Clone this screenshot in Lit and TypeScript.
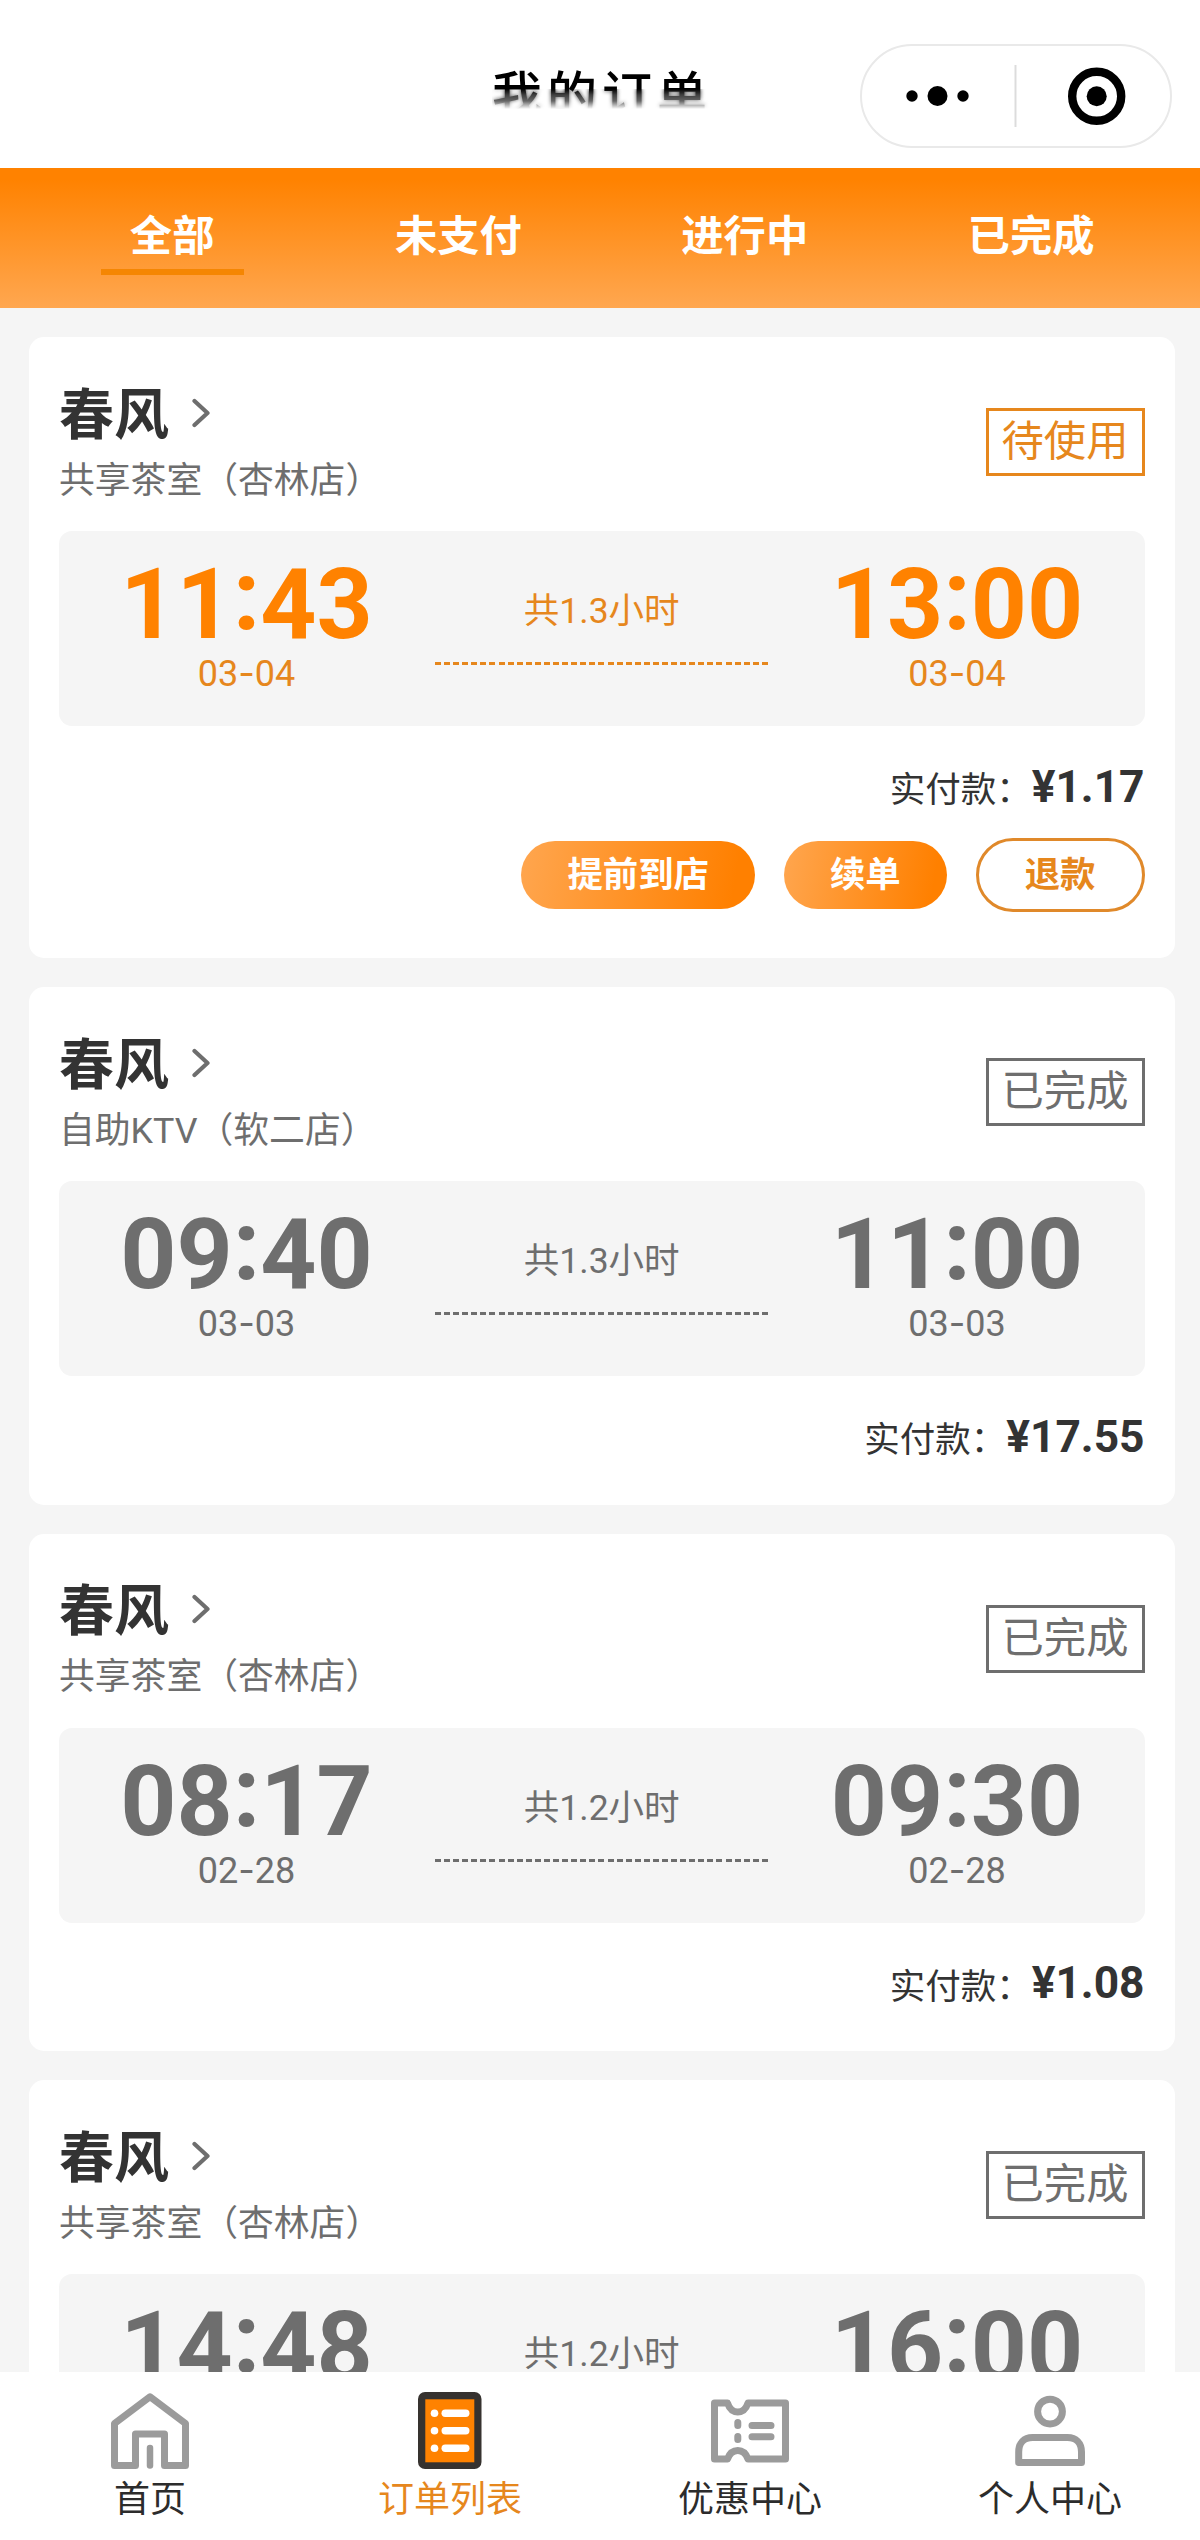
import { LitElement, html, svg, css } from "lit";
import { customElement, property } from "lit/decorators.js";
import { classMap } from "lit/directives/class-map.js";

interface Order {
  shop: string;
  status: string;
  active?: boolean;
  start: string;
  end: string;
  date?: string;
  duration: string;
  price?: string;
}

const ORDERS: Order[] = [
  { shop: "共享茶室（杏林店）", status: "待使用", active: true, start: "11:43", end: "13:00", date: "03-04", duration: "共1.3小时", price: "¥1.17" },
  { shop: "自助KTV（软二店）", status: "已完成", start: "09:40", end: "11:00", date: "03-03", duration: "共1.3小时", price: "¥17.55" },
  { shop: "共享茶室（杏林店）", status: "已完成", start: "08:17", end: "09:30", date: "02-28", duration: "共1.2小时", price: "¥1.08" },
  { shop: "共享茶室（杏林店）", status: "已完成", start: "14:48", end: "16:00", duration: "共1.2小时" },
];

@customElement("order-card")
export class OrderCard extends LitElement {
  @property({ attribute: false }) order!: Order;

  static styles = css`
    :host {
      display: block;
      flex: none;
      background: #fff;
      border-radius: 15px;
      padding: 0 30px 17px;
      color: #6e6e6e;
    }
    .head {
      display: flex;
      justify-content: space-between;
      align-items: flex-start;
      height: 194px;
    }
    .name {
      display: flex;
      align-items: center;
      gap: 23px;
      margin-top: 42.5px;
      font-size: 55px;
      line-height: 70px;
      font-weight: 700;
      color: #333;
    }
    .chev {
      display: block;
      width: 18px;
      height: 30px;
      margin-bottom: 4px;
    }
    .shop {
      margin-top: 6px;
      font-size: 35.8px;
      line-height: 50px;
    }
    .tag {
      box-sizing: border-box;
      margin-top: 71px;
      width: 159px;
      height: 68px;
      border: 3px solid currentColor;
      text-align: center;
      font-size: 42.3px;
      line-height: 61px;
      white-space: nowrap;
    }
    .box {
      display: grid;
      grid-template-columns: 375px 1fr 375px;
      height: 195px;
      border-radius: 13px;
      background: #f5f5f5;
    }
    .col {
      display: flex;
      flex-direction: column;
      align-items: center;
    }
    .time {
      display: flex;
      margin-top: 24px;
      height: 98px;
      font-size: 98px;
      line-height: 100px;
      font-weight: 700;
    }
    .colon {
      line-height: 82px;
    }
    .date {
      font-size: 36px;
      line-height: 41px;
    }
    .dash {
      font-family: Inter, sans-serif;
    }
    .mid {
      display: flex;
      flex-direction: column;
      align-items: center;
    }
    .dur {
      margin-top: 55px;
      font-size: 35.5px;
      line-height: 50px;
      white-space: nowrap;
    }
    .line {
      width: 333px;
      height: 3px;
      margin-top: 26px;
      background: repeating-linear-gradient(90deg, currentColor 0 6px, transparent 6px 9.08px);
    }
    .accent {
      color: #e6871d;
    }
    .accent .time {
      color: #ff8200;
    }
    .pay {
      display: flex;
      justify-content: flex-end;
      align-items: center;
      height: 99px;
      margin: 11px 0 1.5px;
      color: #333;
      font-size: 35.5px;
    }
    .price {
      font-size: 44.3px;
      font-weight: 700;
    }
    .actions {
      display: flex;
      justify-content: flex-end;
      align-items: center;
      gap: 29px;
      margin-bottom: 29.5px;
    }
    .btn {
      padding: 0 46px;
      height: 68px;
      border-radius: 37px;
      font-size: 35.4px;
      line-height: 68px;
      font-weight: 700;
      color: #fff;
      background: linear-gradient(100deg, #ffa64f, #ff8000 90%);
    }
    .ghost {
      border: 3px solid #e0892a;
      color: #e6871d;
      background: none;
    }
  `;

  private time(value: string, date?: string) {
    const [h, m] = value.split(":");
    const [mo, d] = (date ?? "").split("-");
    return html`<div class="col">
      <div class="time"><span>${h}</span><span class="colon">:</span><span>${m}</span></div>
      ${date ? html`<div class="date">${mo}<span class="dash">-</span>${d}</div>` : null}
    </div>`;
  }

  render() {
    const o = this.order;
    const tone = { accent: !!o.active };
    return html`
      <div class="head">
        <div>
          <div class="name">
            春风
            <svg class="chev" viewBox="0 0 18 30" fill="none" stroke="#6e6e6e" stroke-width="4.2" stroke-linecap="round" stroke-linejoin="round">
              <path d="M2.5 3L15.5 15L2.5 27" />
            </svg>
          </div>
          <div class="shop">${o.shop}</div>
        </div>
        <div class="tag ${classMap(tone)}">${o.status}</div>
      </div>
      <div class="box ${classMap(tone)}">
        ${this.time(o.start, o.date)}
        <div class="mid">
          <div class="dur">${o.duration}</div>
          <div class="line"></div>
        </div>
        ${this.time(o.end, o.date)}
      </div>
      ${o.price
        ? html`<div class="pay"><span>实付款：</span><span class="price">${o.price}</span></div>`
        : null}
      ${o.active
        ? html`<div class="actions">
            <div class="btn">提前到店</div>
            <div class="btn">续单</div>
            <div class="btn ghost">退款</div>
          </div>`
        : null}
    `;
  }
}

const HOME = svg`<g fill="none" stroke="#9b9b9b" stroke-width="7" stroke-linejoin="round" stroke-linecap="round">
  <path d="M39 4.8L3.5 31.5V73.5H24.5V42H53.5V73.5H74.5V31.5Z" />
  <path d="M39 56V73.5" stroke-width="6.5" />
</g>`;

const LIST = svg`<rect x="7" y="0" width="63.5" height="77" rx="7" fill="#36322f" />
  <rect x="14.3" y="7.3" width="49" height="63" fill="#ff8200" />
  <g fill="#fff">
    <circle cx="23.5" cy="21.2" r="3.8" /><circle cx="23.5" cy="38.7" r="3.8" /><circle cx="23.5" cy="56.2" r="3.8" />
    <rect x="30.5" y="17.5" width="28" height="7.4" rx="3.7" /><rect x="30.5" y="35" width="28" height="7.4" rx="3.7" /><rect x="30.5" y="52.5" width="28" height="7.4" rx="3.7" />
  </g>`;

const TICKET = svg`<g fill="none" stroke="#9b9b9b" stroke-width="7" stroke-linejoin="round" stroke-linecap="round">
  <path d="M3.5 11H16.5C18.5 17 22 20 26.8 20S35 17 37 11H74.5V67H37C35 61.5 31.5 58.5 26.8 58.5S18.5 61.5 16.5 67H3.5Z" />
  <path d="M26.8 30.5V33.5M26.8 44.5V47.5M41 33.5H60M41 44.8H60" />
</g>`;

const PERSON = svg`<g fill="none" stroke="#9b9b9b" stroke-width="7" stroke-linejoin="round">
  <circle cx="39" cy="19.6" r="12.4" />
  <path d="M7.7 70.5V60C7.7 51 13 45.5 21.5 45.5H56.5C65 45.5 70.5 51 70.5 60V70.5Z" />
</g>`;

const NAV = [
  { label: "首页", icon: HOME },
  { label: "订单列表", icon: LIST, active: true },
  { label: "优惠中心", icon: TICKET },
  { label: "个人中心", icon: PERSON },
];

const TABS = ["全部", "未支付", "进行中", "已完成"];

@customElement("app-root")
export class AppRoot extends LitElement {
  static styles = css`
    :host {
      display: flex;
      flex-direction: column;
      width: 1200px;
      height: 2540px;
      overflow: hidden;
      background: #f5f5f5;
      font-family: Roboto, "Noto Sans CJK SC", sans-serif;
    }
    .top {
      box-sizing: border-box;
      flex: none;
      display: grid;
      grid-template-columns: 1fr auto 1fr;
      align-items: center;
      height: 168px;
      padding: 24px 28px 0;
      background: #fff;
    }
    .title {
      position: relative;
      grid-column: 2;
      font-size: 50px;
      letter-spacing: 5px;
      line-height: 64px;
      margin-right: -4px;
      font-weight: 500;
      color: #000;
      -webkit-mask-image: linear-gradient(#000 25px, rgba(0, 0, 0, 0.75) 31px, rgba(0, 0, 0, 0.6) 37px, transparent 45px);
      mask-image: linear-gradient(#000 25px, rgba(0, 0, 0, 0.75) 31px, rgba(0, 0, 0, 0.6) 37px, transparent 45px);
    }
    .smear {
      position: absolute;
      inset: 25px 0 0 0;
      backdrop-filter: blur(2px);
    }
    .capsule {
      box-sizing: border-box;
      justify-self: end;
      display: block;
      width: 312px;
      height: 104px;
    }
    .tabs {
      flex: none;
      box-sizing: border-box;
      display: grid;
      grid-template-columns: repeat(4, 286.3px);
      height: 140px;
      padding: 0 29px;
      background: linear-gradient(#ff8200 8%, #ffa750);
    }
    .tab {
      display: flex;
      flex-direction: column;
      align-items: center;
      padding-top: 36px;
      color: #fff;
      font-size: 42.3px;
      line-height: 66px;
      font-weight: 700;
    }
    .tab.on::after {
      content: "";
      width: 143px;
      height: 6px;
      margin-top: -1px;
      background: #f58602;
    }
    .list {
      flex: 1;
      min-height: 0;
      overflow: hidden;
      display: flex;
      flex-direction: column;
      gap: 29px;
      padding: 29px 25.5px 0 29px;
    }
    .nav {
      flex: none;
      display: grid;
      grid-template-columns: repeat(4, 1fr);
      height: 168px;
      background: #fff;
    }
    .item {
      display: flex;
      flex-direction: column;
      align-items: center;
      padding-top: 20px;
      color: #2c2c2c;
      font-size: 36px;
      line-height: 60px;
    }
    .item.on {
      color: #e6871d;
    }
    .ico {
      display: block;
      width: 78px;
      height: 78px;
    }
  `;

  render() {
    return html`
      <div class="top">
        <div class="title">我的订单<div class="smear"></div></div>
        <svg class="capsule" viewBox="0 0 312 104">
          <rect x="1" y="1" width="310" height="102" rx="51" fill="#fff" stroke="#e9e9e9" stroke-width="2" />
          <circle cx="52" cy="52" r="5.7" /><circle cx="77.5" cy="52" r="10" /><circle cx="103" cy="52" r="5.7" />
          <path d="M155.5 21V83" stroke="#dcdcdc" stroke-width="2" />
          <circle cx="236.7" cy="52.3" r="24.5" fill="none" stroke="#000" stroke-width="8.4" />
          <circle cx="236.7" cy="52.3" r="10" />
        </svg>
      </div>
      <div class="tabs">
        ${TABS.map((t, i) => html`<div class="tab ${classMap({ on: i === 0 })}">${t}</div>`)}
      </div>
      <div class="list">${ORDERS.map((o) => html`<order-card .order=${o}></order-card>`)}</div>
      <div class="nav">
        ${NAV.map(
          (n) => html`<div class="item ${classMap({ on: !!n.active })}">
            <svg class="ico" viewBox="0 0 78 78">${n.icon}</svg>
            <span>${n.label}</span>
          </div>`
        )}
      </div>
    `;
  }
}
